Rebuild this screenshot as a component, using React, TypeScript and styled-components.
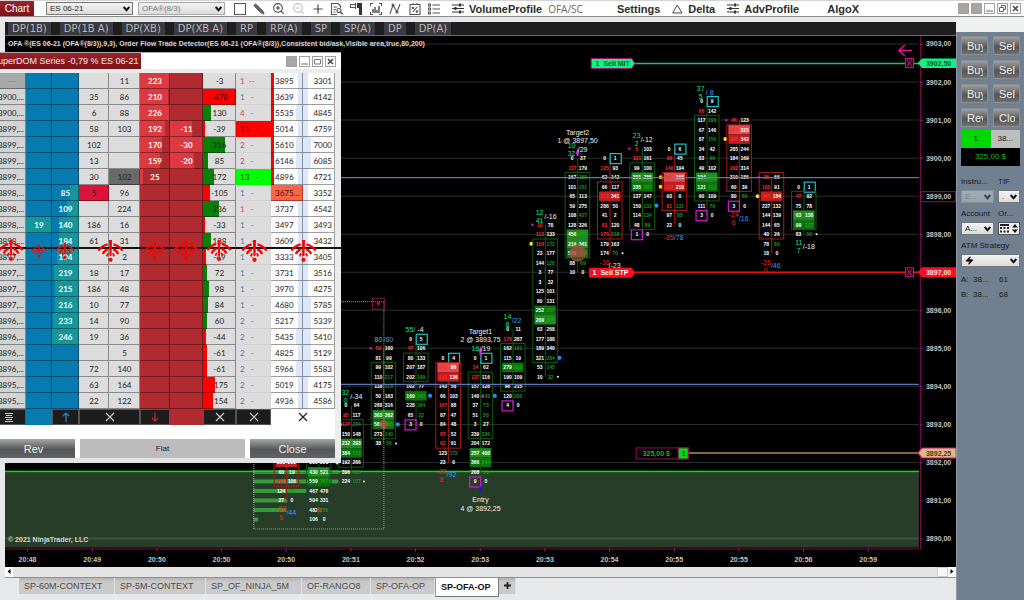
import React from "react";
import styled, { createGlobalStyle } from "styled-components";
import { Pencil, ZoomIn, ZoomOut, Plus, FileSearch, Zap } from "lucide-react";

const sans = '"Liberation Sans", Arial, sans-serif';

const Global = createGlobalStyle`
  * { box-sizing: border-box; }
  body { margin: 0; background: #e6e8e9; font-family: ${sans}; overflow-x: hidden; }
  button { font-family: inherit; padding: 0; border: 0; background: none; }
  h1, h2 { margin: 0; font-weight: 400; }
`;

/* ---------- frame ---------- */

const Page = styled.div`
  position: relative;
  min-height: 100vh;
  display: flex;
  flex-direction: column;
  overflow: hidden;
`;

const Body = styled.div`
  flex: 1;
  display: flex;
  background: #eff1f1;
`;

const Main = styled.main`
  flex: 1;
  min-width: 0;
  display: flex;
  flex-direction: column;
  padding: 5px 0 0 5px;
  background: #e6e8e9;
`;

/* ---------- toolbar ---------- */

const Toolbar = styled.header`
  height: 17px;
  display: flex;
  align-items: center;
  background: #fff;
  border-bottom: 1px solid #8a8a8a;
  border-top: 1px solid #d4d4d4;
`;

const ChartTitle = styled.h1`
  width: 34px;
  height: 15px;
  margin-right: 12px;
  background: linear-gradient(#9c2228, #7c1218);
  color: #fff;
  font-size: 10px;
  line-height: 15px;
  text-align: center;
`;

const Select = styled.select<{ $muted?: boolean }>`
  display: block;
  width: 100%;
  height: 13px;
  padding: 0 10px 0 3px;
  border: 1px solid ${(p) => (p.$muted ? "#a8a8a8" : "#777")};
  border-radius: 0;
  appearance: none;
  background: linear-gradient(#f2f2f2, #dcdcdc);
  color: ${(p) => (p.$muted ? "#777" : "#222")};
  font: 8px ${sans};
`;

const SelectWrap = styled.div<{ $w?: string; $dim?: boolean; $gap?: number }>`
  position: relative;
  flex: none;
  width: ${(p) => p.$w ?? "auto"};
  margin-left: ${(p) => p.$gap ?? 0}px;
  opacity: ${(p) => (p.$dim ? 0.55 : 1)};
  svg { position: absolute; right: 3px; top: 4px; pointer-events: none; }
`;

const StrategyIcon = styled.span`
  svg { left: 4px; top: 2px; }
`;

const ToolIcons = styled.div`
  display: flex;
  justify-content: space-between;
  width: 208px;
  margin: 0 11px 0 8px;
`;

const IconButton = styled.button<{ $flip?: boolean }>`
  width: 14px;
  height: 14px;
  display: grid;
  place-items: center;
  color: #444;
  svg { display: block; transform: ${(p) => (p.$flip ? "scaleX(-1)" : "none")}; }
`;

const Menu = styled.nav`
  display: flex;
  align-items: center;
  flex: 1;
`;

const MenuItem = styled.button<{ $gap?: number; $light?: boolean }>`
  display: flex;
  align-items: center;
  gap: 5px;
  margin-right: ${(p) => p.$gap ?? 0}px;
  color: ${(p) => (p.$light ? "#666" : "#2c2c2c")};
  font: ${(p) => (p.$light ? '400 10px "Open Sans", sans-serif' : `700 11px ${sans}`)};
  white-space: nowrap;
`;

const WindowButtons = styled.div`
  display: flex;
  gap: 2px;
  padding-right: 3px;
`;

const WinButton = styled.button<{ $solid?: boolean }>`
  width: 11px;
  height: 11px;
  display: grid;
  place-items: center;
  border: 1px solid #a5a0a0;
  background: ${(p) => (p.$solid ? "#aaa5a5" : "#fff")};
  svg { display: block; }
`;

/* ---------- strategy bar, chart, tabs ---------- */

const StrategyBar = styled.div`
  height: 14px;
  display: flex;
  gap: 9px;
  padding-left: 3px;
  background: #1e1e1e;
  border-bottom: 1px solid #6a6a6a;
`;

const StrategyButton = styled.button`
  padding: 0 4px;
  background: #3a3a40;
  color: #b8b8b8;
  font: 10px/13px "DejaVu Sans", sans-serif;
  white-space: nowrap;
`;

const ChartSvg = styled.svg`
  display: block;
  width: 100%;
  background: #000;
  font-family: ${sans};
  text { dominant-baseline: central; white-space: pre; }
`;

const ScrollBar = styled.div`
  height: 11px;
  display: flex;
  justify-content: space-between;
  background: #e3e3e3;
  border-bottom: 1px solid #8f8f8f;
`;

const ScrollEnd = styled.div`
  display: flex;
  button { width: 8px; height: 10px; background: #fff; display: grid; place-items: center; }
`;

const Thumb = styled.div`
  width: 11px;
  height: 10px;
  background: #f6f6f6;
  border: 1px solid #cfcfcf;
`;

const Tabs = styled.nav`
  display: flex;
  align-items: flex-start;
  padding-left: 14px;
`;

const Tab = styled.button<{ $w: number; $active?: boolean }>`
  width: ${(p) => p.$w}px;
  height: ${(p) => (p.$active ? 19 : 16)}px;
  padding-left: 5px;
  text-align: left;
  white-space: nowrap;
  border-right: 1px solid ${(p) => (p.$active ? "#777" : "#e0e0e0")};
  border-bottom: ${(p) => (p.$active ? "1px solid #777" : "0")};
  border-left: ${(p) => (p.$active ? "1px solid #999" : "0")};
  background: ${(p) => (p.$active ? "#fff" : "linear-gradient(#b4b4b4, #cacaca 4px)")};
  color: ${(p) => (p.$active ? "#111" : "#4a4a4a")};
  font: ${(p) => (p.$active ? 700 : 400)} 9px/16px ${sans};
`;

/* ---------- order panel ---------- */

const Side = styled.aside`
  width: 68px;
  flex: none;
  margin-top: 15px;
  padding: 4px 4px 0 4px;
  background: #708090;
  border-left: 1px solid #8f99a3;
  color: #151a20;
  font-size: 8px;
`;

const OrderGrid = styled.div`
  display: grid;
  grid-template-columns: 1fr 1fr;
  gap: 5px;
`;

const OrderButton = styled.button`
  height: 19px;
  padding-left: 5px;
  background: linear-gradient(#a0a0a0, #555 60%, #707070);
  border: 1px solid #8a8f94;
  color: #eee;
  font-size: 11px;
  text-align: left;
  span { display: block; width: 16px; overflow: hidden; }
`;

const Position = styled.div`
  display: grid;
  grid-template-columns: 1fr 1fr;
  margin-top: 3px;
  text-align: center;
  line-height: 18px;
`;

const Qty = styled.div`
  background: #00d800;
`;
const Avg = styled.div`
  background: #bdbdbd;
`;
const Pnl = styled.div`
  grid-column: 1 / 3;
  background: #000;
  color: #1cb81c;
`;

const Fields = styled.div`
  display: grid;
  grid-template-columns: 33px 22px;
  column-gap: 4px;
  margin-top: 10px;
`;

const Field = styled.label<{ $wide?: boolean }>`
  display: block;
  grid-column: ${(p) => (p.$wide ? "1 / 3" : "auto")};
  white-space: nowrap;
  line-height: 11px;
  height: 32px;
  > span { display: block; height: 14px; }
`;

const Stepper = styled.div`
  height: 13px;
  display: flex;
  align-items: center;
  justify-content: space-around;
  background: #eee;
  border: 1px solid #555;
`;

const Quotes = styled.dl`
  display: grid;
  grid-template-columns: 12px 26px 1fr;
  margin: 0;
  line-height: 15px;
  dt, dd { margin: 0; }
`;

/* ---------- price ladder window ---------- */

const Ladder = styled.section`
  position: absolute;
  left: -8px;
  top: 52px;
  width: 349px;
  padding-right: 6px;
  background: #ececec;
  border-top: 1px solid #aaa;
  border-bottom: 5px solid #e4e4e4;
  font-family: Lato, sans-serif;
`;

const LadderHead = styled.div`
  height: 16px;
  margin: 0 -6px 4px 0;
  padding-right: 2px;
  display: flex;
  align-items: center;
  justify-content: space-between;
  background: #fff;
  h2 {
    width: 149px;
    height: 16px;
    background: linear-gradient(#9c2228, #7c1218);
    color: #f4e8e8;
    font: 9px/16px ${sans};
    white-space: nowrap;
  }
`;

const LadderTable = styled.table`
  width: 343px;
  table-layout: fixed;
  border-collapse: collapse;
  border-spacing: 0;
  font-size: 8px;
  color: #222;
  td { height: 16px; padding: 0; }
`;

const Cell = styled.td<{ $bg: string; $fg?: string; $align?: string; $bold?: boolean; $edge?: string }>`
  position: relative;
  background: ${(p) => p.$bg};
  color: ${(p) => p.$fg ?? "#222"};
  text-align: ${(p) => p.$align ?? "center"};
  font-weight: ${(p) => (p.$bold ? 700 : 400)};
  overflow: hidden;
  white-space: nowrap;
  &::after {
    content: "";
    position: absolute;
    inset: 0;
    box-shadow: inset -1px -1px 0 ${(p) => p.$edge ?? "rgba(0,0,0,.38)"};
  }
`;

const Value = styled.span<{ $l?: number; $r?: number }>`
  position: relative;
  padding-left: ${(p) => p.$l ?? 0}px;
  padding-right: ${(p) => p.$r ?? 0}px;
  white-space: pre;
`;

const Bar = styled.i<{ $c: string; $side?: "left" | "right" }>`
  position: absolute;
  top: 0;
  bottom: 0;
  ${(p) => p.$side ?? "left"}: 0;
  background: ${(p) => p.$c};
`;

const FootCell = styled.td<{ $bg?: string }>`
  background: ${(p) => p.$bg ?? "#1d1d1d"};
  box-shadow: inset 0 0 0 1px ${(p) => (p.$bg ? p.$bg : "#555")};
  svg { display: block; margin: 0 auto; }
`;

const LadderActions = styled.div`
  display: grid;
  grid-template-columns: 83px 1fr 85px;
  gap: 5px;
  padding-top: 14px;
  background: #fff;
`;

const ActionButton = styled.button<{ $flat?: boolean }>`
  height: 19px;
  background: ${(p) => (p.$flat ? "#bcbcbc" : "linear-gradient(#a5a5a5, #55585a 55%, #606264)")};
  color: ${(p) => (p.$flat ? "#222" : "#eee")};
  font: ${(p) => (p.$flat ? 8 : 11)}px ${sans};
`;

const Signals = styled.div`
  position: absolute;
  left: 0;
  right: 0;
  top: 186px;
  height: 22px;
  display: grid;
  grid-template-columns: 38px 18px 34px 56px 34px 28px 38px 32px 66px;
  align-items: center;
  justify-items: center;
  pointer-events: none;
  &::before {
    content: "";
    position: absolute;
    left: 0;
    right: 0;
    top: 8px;
    height: 2px;
    background: #111;
  }
  svg { position: relative; }
`;

/* ---------- ladder data ---------- */

type Row = [string, string, string, number, string, string, string, number, string, number, string, number, string, string, string, string];
// price, buy, bid, bidBar, c1, c2, ask, askBar, sell, sellBar, delta, deltaBar, count, countColour, left, right
const rows: Row[] = [
  ["---", "", "", 0, "", "11", "223", 30, "", 0, "-3", 0, "1  --", "r", "3895", "3301"],
  ["3900,...", "", "", 0, "35", "86", "210", 28, "", 0, "-478", -33, "1   -", "b", "3639", "4142"],
  ["3900,...", "", "", 0, "6", "88", "226", 30, "", 0, "130", 8, "4   -", "r", "5535", "4845"],
  ["3899,...", "", "", 0, "58", "103", "192", 25, "-11", 22, "-39", -2, "11   -", "R", "5014", "4759"],
  ["3899,...", "", "", 0, "102", "", "170", 22, "-30", 33, "316", 22, "2   -", "r", "5610", "7000"],
  ["3899,...", "", "", 0, "13", "", "159", 20, "-20", 24, "85", 5, "2   -", "r", "6146", "6085"],
  ["3899,...", "", "", 0, "30", "102", "25", 3, "", 0, "172", 11, "13   -", "G", "4896", "4721"],
  ["3898,...", "", "85", 9, "5", "96", "", 0, "", 0, "-105", -7, "1   -", "b", "3675...", "3352"],
  ["3898,...", "", "109", 12, "", "224", "", 0, "", 0, "236", 16, "1   -", "r", "3737", "4542"],
  ["3898,...", "19", "140", 20, "186", "16", "", 0, "", 0, "-33", -2, "1   -", "b", "3497", "3493"],
  ["3898,...", "", "184", 20, "61", "31", "", 0, "", 0, "138", 8, "1   -", "b", "3609", "3432"],
  ["3897,...", "", "194", 22, "", "2", "", 0, "", 0, "-49", -3, "1   -", "b", "3333", "3405"],
  ["3897,...", "", "219", 25, "18", "17", "", 0, "", 0, "72", 4, "1   -", "b", "3731", "3516"],
  ["3897,...", "", "215", 24, "186", "48", "", 0, "", 0, "98", 6, "1   -", "b", "3970", "4275"],
  ["3897,...", "", "216", 24, "10", "77", "", 0, "", 0, "84", 5, "1   -", "b", "4680", "5785"],
  ["3896,...", "", "233", 26, "14", "90", "", 0, "", 0, "60", 4, "2   -", "b", "5217", "5339"],
  ["3896,...", "", "246", 27, "19", "36", "", 0, "", 0, "-44", -3, "2   -", "b", "5435", "5410"],
  ["3896,...", "", "", 0, "", "5", "", 0, "", 0, "-61", -4, "2   -", "b", "4825", "5129"],
  ["3896,...", "", "", 0, "72", "140", "", 0, "", 0, "-61", -4, "2   -", "b", "5966", "5583"],
  ["3895,...", "", "", 0, "63", "164", "", 0, "", 0, "-175", -12, "2   -", "b", "5019", "4175"],
  ["3895,...", "", "", 0, "22", "122", "", 0, "", 0, "-154", -10, "2   -", "b", "4936", "4586"],
];
const widths = [34, 26, 27, 30, 31, 30, 33, 33, 35, 32, 32];
const countBg: Record<string, string> = { R: "#ff0000", G: "#00ff00" };
const countFg: Record<string, string> = { r: "#dc3c50", b: "#3f7cb4", R: "#5a0000", G: "#0a4a0a" };

const Cross = ({ c = "#ccc" }: { c?: string }) => (
  <svg width="10" height="10" viewBox="0 0 10 10" stroke={c} strokeWidth="1.2"><path d="M1 1L9 9M9 1L1 9" /></svg>
);

const Arrow = ({ c, down }: { c: string; down?: boolean }) => (
  <svg width="8" height="10" viewBox="0 0 8 10" fill="none" stroke={c} strokeWidth="1.2">
    <path d={down ? "M4 0V9M1 6L4 9L7 6" : "M4 10V1M1 4L4 1L7 4"} />
  </svg>
);

const Signal = ({ w }: { w: number }) => (
  <svg width={w} height={w * 0.86} viewBox="0 0 28 24" fill="none" stroke="#ff0000" strokeWidth="2.4">
    <path d="M1.500 12Q5 7 11 5.500M17 5.500Q23 7 26.500 12" />
    <path d="M6 15.500Q8 11.500 11.200 10.500M16.800 10.500Q20 11.500 22 15.500" />
    <path d="M10.300 18Q10.600 16 11.800 15M16.200 15Q17.400 16 17.700 18" strokeWidth="1.800" />
    <path d="M12.400 1H15.600L15 17.500H13Z" fill="#ff0000" stroke="none" />
    <circle cx="14" cy="21.500" r="2.200" fill="#ff0000" stroke="none" />
  </svg>
);

function LadderWindow() {
  return (
    <Ladder>
      <LadderHead>
        <h2>SuperDOM Series -0,79 % ES 06-21</h2>
        <WindowButtons>
          <WinButton $solid aria-label="Link" />
          <WinButton aria-label="Minimize"><svg width="7" height="7"><path d="M0 6H7" stroke="#666" /></svg></WinButton>
          <WinButton aria-label="Maximize"><svg width="7" height="7"><path d="M.5 1.500H6.500V6H.5Z" stroke="#777" fill="none" /></svg></WinButton>
          <WinButton aria-label="Close window"><svg width="7" height="7"><path d="M1 1L6 6M6 1L1 6" stroke="#444" strokeWidth="1.5" /></svg></WinButton>
        </WindowButtons>
      </LadderHead>
      <LadderTable>
        <colgroup>{widths.map((w, i) => <col key={i} width={w} />)}</colgroup>
        <tbody>
          {rows.map((r, i) => {
            const [price, buy, bid, bidBar, c1, c2, ask, askBar, sell, sellBar, delta, dBar, count, cc, left, right] = r;
            const last = i === 7;
            return (
              <tr key={i}>
                <Cell $bg={i === 0 ? "#a9a9a9" : "#d3d3d3"} $fg={i === 0 ? "#3f8fa8" : undefined} $align="right">
                  <Value $r={i === 0 ? 10 : 2}>{price}</Value>
                </Cell>
                <Cell $bg={buy ? "#14969a" : "#067bb0"} $fg="#fff" $bold>{buy}</Cell>
                <Cell $bg="#067bb0" $fg="#fff" $bold>
                  <Bar $c="#14969a" $side="right" style={{ width: bidBar }} /><Value>{bid}</Value>
                </Cell>
                <Cell $bg={last ? "#dc143c" : "#dcdcdc"}>{c1}</Cell>
                <Cell $bg={i === 6 ? "#696969" : "#dcdcdc"}>{c2}</Cell>
                <Cell $bg="#b02a30" $fg="#fff" $bold>
                  <Bar $c="#dc3a40" style={{ width: askBar }} /><Value>{ask}</Value>
                </Cell>
                <Cell $bg="#b02a30" $fg="#fff" $bold>
                  <Bar $c="#dc3a40" style={{ width: sellBar }} /><Value>{sell}</Value>
                </Cell>
                <Cell $bg="#dcdcdc">
                  <Bar $c={dBar > 0 ? "#068006" : "#ff0000"} style={{ width: Math.abs(dBar) }} /><Value>{delta}</Value>
                </Cell>
                <Cell $bg={countBg[cc] ?? "#dcdcdc"} $fg={countFg[cc]} $align="left" $edge={countBg[cc] ?? "#d2d2d2"}>
                  <Value $l={4}>{count}</Value>
                </Cell>
                <Cell $bg={last ? "#ff6347" : "#fff"} $align="left">
                  {i < 7 && <Bar $c="#ff0000" style={{ width: 3 }} />}
                  {!last && <Bar $c="#dde7fa" $side="right" style={{ width: Number(left) > 5400 ? 7 : 5 }} />}
                  <Value $l={4}>{left}</Value>
                </Cell>
                <Cell $bg="#fff" $align="right">
                  <Bar $c="#dde7fa" style={{ width: Number(right) > 5000 ? 8 : 5 }} />
                  <Value $r={3}>{right}</Value>
                </Cell>
              </tr>
            );
          })}
        </tbody>
        <tfoot>
          <tr>
            <FootCell><svg width="8" height="9" stroke="#ccc" strokeWidth="1"><path d="M0 .5H8M1 2.500H7M0 4.500H8M1 6.500H7M0 8.500H8" /></svg></FootCell>
            <FootCell $bg="#067bb0" />
            <FootCell><Arrow c="#1a90d0" /></FootCell>
            <FootCell colSpan={2}><Cross /></FootCell>
            <FootCell><Arrow c="#c02a30" down /></FootCell>
            <FootCell $bg="#b02a30" />
            <FootCell><Cross /></FootCell>
            <FootCell><Cross /></FootCell>
            <FootCell colSpan={2} $bg="#fff"><Cross c="#222" /></FootCell>
          </tr>
        </tfoot>
      </LadderTable>
      <LadderActions>
        <ActionButton>Rev</ActionButton>
        <ActionButton $flat>Flat</ActionButton>
        <ActionButton>Close</ActionButton>
      </LadderActions>
      <Signals>{[26, 16, 20, 27, 22, 26, 26, 27, 27].map((w, i) => <Signal key={i} w={w} />)}</Signals>
    </Ladder>
  );
}

/* ---------- chart ---------- */

const X0 = 544.8;
const STEP = 32.3;
const tickY = (k: number) => 82 + k * 9.5;

// A print is [left, right, flags]. Flags: r = red left, g = green right, A/B = bright/deep fill,
// c = cyan box right, m = magenta box left, y = yellow, o = orange, b = blue, w = white, p = magenta dot, t = trade circle
type Print = [string, string, string?];
interface Candle { col: number; start: number; up: boolean; frame: [number, number]; prints: Print[] }

const candles: Candle[] = [
  { col: -8, start: 40, up: false, frame: [39, 42], prints: [["390", "291", "B"], ["60", "19"], ["107", "106", "r"], ["124", "95", "g"], ["27", "0"]] },
  { col: -7, start: 40, up: true, frame: [39, 42], prints: [["390", "291"], ["430", "521", "A"], ["559", "767", "Bg"], ["467", "476"], ["504", "331"], ["482", "256", "gt"], ["106", "0"]] },
  { col: -6, start: 34, up: true, frame: [36, 40], prints: [["0", "64"], ["95", "117", "r"], ["127", "234", "rgo"], ["150", "148"], ["232", "293", "A"], ["384", "512", "Bg"], ["192", "266", "y"], ["396", "565", "g"], ["224", "107", "gw"]] },
  { col: -5, start: 28, up: true, frame: [30, 37], prints: [["59", "160", "rp"], ["81", "99"], ["99", "102"], ["110", "217", "g"], ["118", "118", "g"], ["50", "163"], ["268", "316"], ["363", "362", "A"], ["580", "385", "Bgtb"], ["273", "140", "g"], ["38", "56", "gw"]] },
  { col: -4, start: 27, up: true, frame: [29, 31], prints: [["0", "5", "c"], ["47", "106", "r"], ["80", "133"], ["207", "187"], ["202", "199", "g"], ["102", "77"], ["169", "262", "Bgb"], ["228", "164", "g"], ["65", "22", "g"], ["3", "0", "m"]] },
  { col: -3, start: 29, up: false, frame: [30, 38], prints: [["0", "4", "c"], ["146", "86", "rA"], ["103", "136", "rB"], ["143", "58"], ["66", "103"], ["167", "88", "r"], ["87", "47"], ["84", "48"], ["87", "52", "r"], ["62", "91", "r"], ["123", "172", "g"], ["23", "0"]] },
  { col: -2, start: 29, up: true, frame: [31, 37], prints: [["0", "1", "c"], ["14", "62", "r"], ["137", "116", "r"], ["157", "128"], ["140", "143", "gb"], ["37", "73", "g"], ["51", "50", "g"], ["3", "27"], ["239", "236", "g"], ["204", "172"], ["257", "400", "A"], ["366", "344", "Bg"], ["208", "53", "g"], ["9", "0", "m"]] },
  { col: -1, start: 26, up: true, frame: [28, 32], prints: [["0", "11"], ["176", "287", "r"], ["162", "191", "g"], ["115", "19"], ["279", "308", "Bg"], ["190", "109"], ["96", "215"], ["120", "200", "g"], ["4", "0", "m"]] },
  { col: 0, start: 15, up: true, frame: [17, 29], prints: [["10", "78", "rp"], ["113", "133", "r"], ["154", "172", "rgy"], ["23", "177"], ["144", "128", "g"], ["3", "77"], ["3", "32"], ["125", "101"], ["80", "131"], ["252", "257", "Bg"], ["209", "245", "Ag"], ["63", "268"], ["177", "188"], ["189", "340"], ["321", "284", "gb"], ["53", "145", "g"], ["10", "32", "gw"]] },
  { col: 1, start: 8, up: true, frame: [10, 18], prints: [["0", "37"], ["117", "179", "r"], ["167", "258", "g"], ["101", "151", "g"], ["65", "113"], ["59", "275"], ["108", "427", "g"], ["128", "326"], ["456", "466", "Ag"], ["219", "341", "A"], ["529", "359", "Bgt"], ["88", "69", "g"], ["10", "0"]] },
  { col: 2, start: 8, up: false, frame: [11, 16], prints: [["0", "1", "c"], ["125", "93", "r"], ["62", "142"], ["66", "117"], ["319", "341", "rB"], ["286", "50"], ["41", "2"], ["81", "120", "r"], ["175", "218", "rg"], ["179", "163"], ["174", "70", "gw"]] },
  { col: 3, start: 7, up: true, frame: [9, 15], prints: [["5", "103", "rp"], ["121", "161", "r"], ["99", "100"], ["301", "286", "A"], ["335", "301", "Bg"], ["137", "147"], ["150", "132", "gb"], ["114", "134", "g"], ["48", "89", "g"], ["1", "0", "m"]] },
  { col: 4, start: 7, up: false, frame: [10, 13], prints: [["0", "6", "c"], ["39", "45", "r"], ["140", "194", "r"], ["251", "168", "rAy"], ["222", "210", "rBy"], ["93", "0"], ["61", "131", "rg"], ["97", "85", "g"], ["22", "0"]] },
  { col: 5, start: 2, up: true, frame: [4, 12], prints: [["0", "9", "c"], ["66", "142", "r"], ["117", "193", "g"], ["67", "146"], ["87", "156", "g"], ["34", "42"], ["83", "90", "g"], ["49", "102"], ["104", "202", "Ag"], ["121", "112", "Bg"], ["90", "109"], ["111", "79", "g"], ["3", "0", "m"]] },
  { col: 6, start: 4, up: false, frame: [5, 11], prints: [["48", "123", "rp"], ["367", "315", "rA"], ["335", "343", "rBy"], ["285", "244"], ["184", "169"], ["292", "314", "r"], ["310", "186"], ["60", "39"], ["80", "50", "g"], ["3", "0", "m"]] },
  { col: 7, start: 10, up: false, frame: [10, 16], prints: [["36", "66", "rp"], ["100", "91", "r"], ["347", "184", "rBy"], ["237", "132"], ["144", "139"], ["144", "65"], ["40", "26"], ["78", "89", "g"], ["18", "0"]] },
  { col: 8, start: 11, up: true, frame: [12, 15], prints: [["0", "1", "c"], ["47", "92", "r"], ["75", "78"], ["63", "136", "A"], ["99", "127", "Bg"], ["83", "50", "gw"]] },
];

// [x, y, text, colour]
const G = "#1ae08c", R = "#e82424", B = "#3c9cff", W = "#f0f0f0";
const labels: [number, number, string, string][] = [
  [281, 508, "-53", R], [281, 517, "5", R], [291, 512, "/44", B],
  [345, 392, "32", G], [345, 400, "0", G], [356, 396, "/-34", W],
  [378, 339, "80", G], [388, 339, "/60", B],
  [410, 329, "55/", G], [420, 329, "-4", W],
  [441, 471, "-28", R], [441, 479, "8", R], [451, 474, "/92", B],
  [475, 348, "16", G], [485, 348, "/19", W],
  [507, 316, "14", G], [507, 324, "8", G], [516, 320, "/22", B],
  [539, 212, "12", G], [539, 220, "41", G], [550, 216, "/-16", W],
  [571, 145, "10", G], [571, 153, "32", G], [582, 149, "/29", W],
  [604, 262, "-16", R], [614, 265, "/-23", W],
  [636, 135, "23", G], [636, 143, "2", G], [646, 139, "/-12", W],
  [668, 237, "-85", R], [678, 237, "/78", B],
  [700, 88, "37", G], [700, 96, "5", G], [709, 92, "/ 8", B],
  [733, 214, "-24", R], [733, 222, "6", R], [743, 218, "/16", B],
  [765, 262, "-26", R], [765, 270, "0", R], [775, 265, "/46", B],
  [798, 242, "11", G], [798, 250, "7", G], [808, 246, "/-18", W],
  [577, 132, "Target2", W], [577, 140, "1 @ 3897,50", W],
  [480, 331, "Target1", W], [480, 339, "2 @ 3893,75", W],
  [480, 499, "Entry", W], [480, 508, "4 @ 3892,25", W],
];

const dotColours: [string, string, number, number][] = [
  ["y", "#f5f500", -14, 2], ["o", "#ff9a1e", -11, 1.6], ["p", "#e010e0", -13, 1.2], ["b", "#2290ff", 14, 2.1], ["w", "#fff", 12.500, 1],
];

function CandleView({ c }: { c: Candle }) {
  const x = X0 + c.col * STEP;
  const edge = c.up ? "#0e5a0e" : "#a81a1a";
  const end = c.start + c.prints.length - 1;
  return (
    <g>
      <path d={`M${x} ${tickY(c.start)}V${tickY(end)}`} stroke={edge} />
      {c.prints.map(([l, r, f = ""], i) => {
        const y = tickY(c.start + i);
        const fill = f.includes("A") ? (c.up ? "#228a22" : "#de4c4c") : f.includes("B") ? (c.up ? "#0c720c" : "#c01e20") : null;
        return (
          <g key={i}>
            {fill && <rect x={x - 11} y={y - 4.75} width="21.500" height="9.500" fill={fill} />}
            {f.includes("c") && <rect x={x + 0.2} y={y - 4.500} width="11" height="10" fill="#000" stroke="#12c4c8" strokeWidth="1.2" />}
            {f.includes("m") && <rect x={x - 11} y={y - 4.500} width="11" height="10" fill="none" stroke="#d21ad2" strokeWidth="1.2" />}
            <text x={x - 5.500} y={y} fill={f.includes("r") ? "#ff2a2a" : "#fff"}>{l}</text>
            <text x={x + 5.200} y={y} fill={f.includes("g") ? (fill ? "#14a814" : "#1c961c") : "#fff"}>{r}</text>
            {f.includes("t") && <circle cx={x} cy={y} r={c.col === 1 ? 8.500 : c.col === -5 ? 4.500 : 2.600} fill="#a84c40" opacity=".8" />}
            {dotColours.map(([k, col, dx, rad]) => f.includes(k) && <circle key={k} cx={x + dx} cy={y} r={rad} fill={col} />)}
          </g>
        );
      })}
      <rect x={x - 12.500} y={tickY(c.frame[0]) - 4.75} width="24.500" height={(c.frame[1] - c.frame[0] + 1) * 9.5} fill="none" stroke={edge} />
    </g>
  );
}

const times = ["20:48", "20:49", "20:50", "20:50", "20:50", "20:51", "20:52", "20:53", "20:53", "20:54", "20:55", "20:55", "20:56", "20:59"];
const volume: [number, number][] = [[41, 86], [42, 85], [43, 53], [44, 34], [45, 33], [46, 5]];

function Chart() {
  return (
    <ChartSvg viewBox="5 36 950 530" role="img" aria-label="ES 06-21 order flow chart">
      {Array.from({ length: 14 }, (_, i) => <path key={i} d={`M5 ${44 + i * 38}H918`} stroke="#2c2c2c" />)}
      <rect x="5" y="471" width="913" height="76" fill="#273d28" />
      <path d="M5 538H918" stroke="#3a523b" strokeWidth="2" />
      {volume.map(([k, w]) => <rect key={k} x="253" y={tickY(k) - 2} width={w} height="4" fill="#379a3c" />)}
      <path d="M5 471H918" stroke="#0a8a0a" strokeWidth="2" />
      <path d="M5 471H918" stroke="#14d814" />
      <g fontSize="5" fontWeight="700" textAnchor="middle">{candles.map((c) => <CandleView key={c.col} c={c} />)}</g>
      <path d="M253.500 528.500V301.500H383.500V528.500Z" fill="none" stroke="#9aa39a" strokeDasharray="1 1" />
      <rect x="372" y="298" width="12" height="11" fill="none" stroke="#8a1050" />
      <path d="M376 302L378 306L380 302Z" fill="#c81818" />
      <path d="M5 177.500H918M5 384H918" stroke="#5a78b8" strokeWidth="1.3" />
      <g fill="#d81ad8">
        <path d="M575 154H579L577 148ZM576 154H578V156H576Z" />
        <path d="M478 352H482L480 346ZM479 352H481V355H479Z" />
        <path d="M480 396L483 394V398Z" />
      </g>
      <path d="M480 486V492" stroke="#1414ff" strokeWidth="2" />
      <g fontSize="7" textAnchor="middle">
        {labels.map(([x, y, t, f], i) => <text key={i} x={x} y={y} fill={f}>{t}</text>)}
      </g>
      <text x="8" y="44" fontSize="7" fontWeight="700" fill="#d4d4d4">OFA ®(ES 06-21 (OFA®(8/3)),9,3), Order Flow Trade Detector(ES 06-21 (OFA®(8/3)),Consistent bid/ask,Visible area,true,80,200)</text>
      <text x="8" y="539" fontSize="7" fontWeight="700" fill="#d4d4d4">© 2021 NinjaTrader, LLC</text>

      <path d="M5 548.500H919.500V36" fill="none" stroke="#7c0a50" />
      <g fontSize="7" fontWeight="700" fill="#c4c4c4">
        {Array.from({ length: 14 }, (_, i) => (
          <g key={i}>
            <path d={`M919 ${44.5 + i * 38}H922`} stroke="#a01068" />
            <text x="925" y={44 + i * 38}>{`${3903 - i},00`}</text>
          </g>
        ))}
        {times.map((t, i) => (
          <g key={i}>
            <path d={`M${27.5 + i * 64.6} 548V551`} stroke="#b01470" />
            <text x={27.5 + i * 64.6} y="559" textAnchor="middle">{t}</text>
          </g>
        ))}
      </g>

      <path d="M898 50.500H911M904 45L898 50.500L904 56" fill="none" stroke="#e0148c" strokeWidth="1.500" />
      <path d="M634 63.500H918" stroke="#0cc878" strokeWidth="1.500" />
      <path d="M634 272H918" stroke="#e80c18" strokeWidth="1.500" />
      <path d="M688 452.500H918" stroke="#b08c5c" strokeWidth="1.500" />
      <path d="M590.500 58.500H631L634.500 63.500L631 68.500H590.500Z" fill="#0cf582" stroke="#a01068" />
      <path d="M588.500 267.500H631L634.500 272.500L631 277.500H588.500Z" fill="#ff0c20" />
      {[63, 272].map((y) => (
        <g key={y} stroke="#d0147c">
          <rect x="904.500" y={y - 4.5} width="8" height="9" fill="#1c0010" />
          <path d={`M906 ${y - 3}L911 ${y + 3}M911 ${y - 3}L906 ${y + 3}`} />
        </g>
      ))}
      <path d="M955 58.500H921L917 63L921 68H955Z" fill="#0cf582" />
      <rect x="919.500" y="191.500" width="35" height="10" fill="none" stroke="#90105c" />
      <path d="M955 267H921L917 272L921 277H955Z" fill="#ff0c20" />
      <path d="M955 447.500H921L917 452.500L921 457.500H955Z" fill="#deb887" stroke="#d81478" />
      <rect x="635.500" y="447.500" width="52" height="11" fill="#000" stroke="#90105c" />
      <rect x="677.500" y="447.500" width="10" height="11" fill="#00dc10" stroke="#90105c" />
      <g fontSize="7" fontWeight="700">
        <text x="595" y="63" fill="#0a5030">{"1  Sell MIT"}</text>
        <text x="592" y="272" fill="#fff">{"1  Sell STP"}</text>
        <text x="925" y="63" fill="#0a5030">3902,50</text>
        <text x="925" y="272" fill="#ffe0e0">3897,00</text>
        <text x="925" y="453" fill="#4a3820">3892,25</text>
        <text x="642" y="453" fill="#16b016">325,00 $</text>
        <text x="681" y="453" fill="#0a4a0a">1</text>
      </g>
    </ChartSvg>
  );
}

/* ---------- small icons ---------- */

const Chevron = () => <svg width="7" height="6" viewBox="0 0 7 6" fill="none" stroke="#111" strokeWidth="1.900"><path d="M.7 1L3.500 4.200L6.300 1" /></svg>;
const Sliders = () => (
  <svg width="12" height="11" viewBox="0 0 12 11" stroke="#333" strokeWidth="1.200">
    <path d="M0 2H12M0 5.500H12M0 9H12" /><path d="M8 .5V3.500M3.500 4V7M8 7.500V10.500" strokeWidth="2" />
  </svg>
);
const Glyph = ({ children }: { children: React.ReactNode }) => (
  <svg width="12" height="12" viewBox="0 0 12 12" fill="none" stroke="#555" strokeWidth="1.100">{children}</svg>
);

export default function App() {
  return (
    <Page>
      <Global />
      <Toolbar>
        <ChartTitle>Chart</ChartTitle>
        <SelectWrap $w="87px"><Select aria-label="Instrument"><option>ES 06-21</option></Select><Chevron /></SelectWrap>
        <SelectWrap $w="87px" $gap={5}><Select $muted aria-label="Interval"><option>OFA®(8/3)</option></Select><Chevron /></SelectWrap>
        <ToolIcons>
          <IconButton aria-label="Blank"><Glyph><path d="M.5 .5H11.500V11.500H.5Z" /></Glyph></IconButton>
          <IconButton $flip aria-label="Draw"><Pencil size={12} fill="#666" color="#666" /></IconButton>
          <IconButton aria-label="Zoom in"><ZoomIn size={13} /></IconButton>
          <IconButton aria-label="Zoom out"><ZoomOut size={13} color="#c0c0c0" /></IconButton>
          <IconButton aria-label="Cursor"><Plus size={14} strokeWidth={2} /></IconButton>
          <IconButton aria-label="Data series">
            <Glyph><path d="M6 11.500H.5V.5H7L9.500 3V5M2.500 4H6M2.500 6.500H5M2.500 9H4.500" /><circle cx="8" cy="7.500" r="2" /><path d="M9.500 9L11.700 11.300" strokeWidth="1.500" /></Glyph>
          </IconButton>
          <IconButton aria-label="Trader panel">
            <Glyph><path d="M7 0H12V12H9V5H7Z" fill="#333" stroke="none" /><path d="M0 1.500H5M0 4.500H5M.5 1V5M5.500 0V6" /></Glyph>
          </IconButton>
          <IconButton aria-label="Indicators">
            <Glyph><path d="M3 .5H.5V3M9 .5H11.500V3M3 11.500H.5V9M9 11.500H11.500V9" /><path d="M3 10V6M5 10V4M7 10V7M9 10V3" strokeWidth="1.500" /></Glyph>
          </IconButton>
          <IconButton aria-label="Strategies"><Glyph><path d="M1 11L4 2L8 9L11 1" /><circle cx="4" cy="2" r="1" fill="#555" /><circle cx="8" cy="9" r="1" fill="#555" /></Glyph></IconButton>
          <IconButton aria-label="Analyzer"><Glyph><path d="M1 1.500H11V11.500H1ZM4 0V2M8 0V2M4 9L8 4" /><circle cx="4" cy="5" r=".8" /><circle cx="8" cy="8.500" r=".8" /></Glyph></IconButton>
          <IconButton aria-label="Properties"><Glyph><path d="M4.500 2H12M4.500 6H12M4.500 10H12M.5 1H2.500V3H.5ZM.5 5H2.500V7H.5ZM.5 9H2.500V11H.5Z" /></Glyph></IconButton>
        </ToolIcons>
        <Menu>
          <MenuItem $gap={6}><Sliders />VolumeProfile</MenuItem>
          <MenuItem $gap={34} $light>OFA/SC</MenuItem>
          <MenuItem $gap={12}>Settings</MenuItem>
          <MenuItem $gap={12}><svg width="11" height="10" fill="none" stroke="#444"><path d="M.7 9H10L5.300 1Z" /></svg>Delta</MenuItem>
          <MenuItem $gap={28}><Sliders />AdvProfile</MenuItem>
          <MenuItem>AlgoX</MenuItem>
        </Menu>
        <WindowButtons>
          <WinButton $solid aria-label="Link instrument" />
          <WinButton $solid aria-label="Link interval" />
          <WinButton aria-label="Minimize"><svg width="7" height="7"><path d="M0 6H7" stroke="#666" /></svg></WinButton>
          <WinButton aria-label="Restore"><svg width="7" height="7"><path d="M.5 2.500H4.500V6.500H.5ZM2.500 2V.5H6.500V4.500H5" stroke="#666" fill="none" /></svg></WinButton>
          <WinButton aria-label="Close"><svg width="7" height="7"><path d="M1 1L6 6M6 1L1 6" stroke="#444" strokeWidth="1.500" /></svg></WinButton>
        </WindowButtons>
      </Toolbar>

      <Body>
        <Main>
          <StrategyBar>
            {["DP(1B)", "DP(1B A)", "DP(XB)", "DP(XB A)", "RP", "RP(A)", "SP", "SP(A)", "DP", "DP(A)"].map((t) => <StrategyButton key={t}>{t}</StrategyButton>)}
          </StrategyBar>
          <Chart />
          <ScrollBar>
            <ScrollEnd><button aria-label="Scroll left"><svg width="4" height="5"><path d="M3.500 0V5L.5 2.500Z" /></svg></button></ScrollEnd>
            <ScrollEnd><Thumb /><button aria-label="Scroll right"><svg width="4" height="5"><path d="M.5 0V5L3.500 2.500Z" /></svg></button></ScrollEnd>
          </ScrollBar>
          <Tabs>
            <Tab $w={96}>SP-60M-CONTEXT</Tab>
            <Tab $w={91}>SP-5M-CONTEXT</Tab>
            <Tab $w={96}>SP_OF_NINJA_5M</Tab>
            <Tab $w={69}>OF-RANGO8</Tab>
            <Tab $w={64}>SP-OFA-OP</Tab>
            <Tab $w={64} $active>SP-OFA-OP</Tab>
            <Tab $w={17} aria-label="Add tab"><svg width="7" height="7" stroke="#222" strokeWidth="1.800"><path d="M3.500 0V7M0 3.500H7" /></svg></Tab>
          </Tabs>
        </Main>

        <Side>
          <OrderGrid>
            {["Buy", "Sel", "Buy", "Sel", "Buy", "Sel", "Rev", "Clo"].map((t, i) => <OrderButton key={i}><span>{t}</span></OrderButton>)}
          </OrderGrid>
          <Position><Qty>1</Qty><Avg>38...</Avg><Pnl>325,00 $</Pnl></Position>
          <Fields>
            <Field><span>Instru...</span><SelectWrap $dim><Select disabled $muted><option>E...</option></Select><Chevron /></SelectWrap></Field>
            <Field><span>TIF</span><SelectWrap><Select><option>.</option></Select><Chevron /></SelectWrap></Field>
            <Field><span>Account</span><SelectWrap><Select><option>A...</option></Select><Chevron /></SelectWrap></Field>
            <Field as="div"><span>Or...</span>
              <Stepper>
                <svg width="9" height="9" fill="#222"><path d="M0 0H9V2H0ZM0 3H2V5H0ZM3.500 3H5.500V5H3.500ZM7 3H9V5H7ZM0 6.500H2V8.500H0ZM3.500 6.500H5.500V8.500H3.500ZM7 6.500H9V8.500H7Z" /></svg>
                <svg width="6" height="9" fill="#111"><path d="M0 3.500L3 0L6 3.500ZM0 5.500L3 9L6 5.500Z" /></svg>
              </Stepper>
            </Field>
            <Field $wide><span>ATM Strategy</span>
              <SelectWrap>
                <Select aria-label="ATM Strategy"><option> </option></Select>
                <Chevron />
                <StrategyIcon><Zap size={9} fill="#111" color="#111" /></StrategyIcon>
              </SelectWrap>
            </Field>
          </Fields>
          <Quotes>
            <dt>A:</dt><dd>38...</dd><dd>61</dd>
            <dt>B:</dt><dd>38...</dd><dd>68</dd>
          </Quotes>
        </Side>
      </Body>
      <LadderWindow />
    </Page>
  );
}
